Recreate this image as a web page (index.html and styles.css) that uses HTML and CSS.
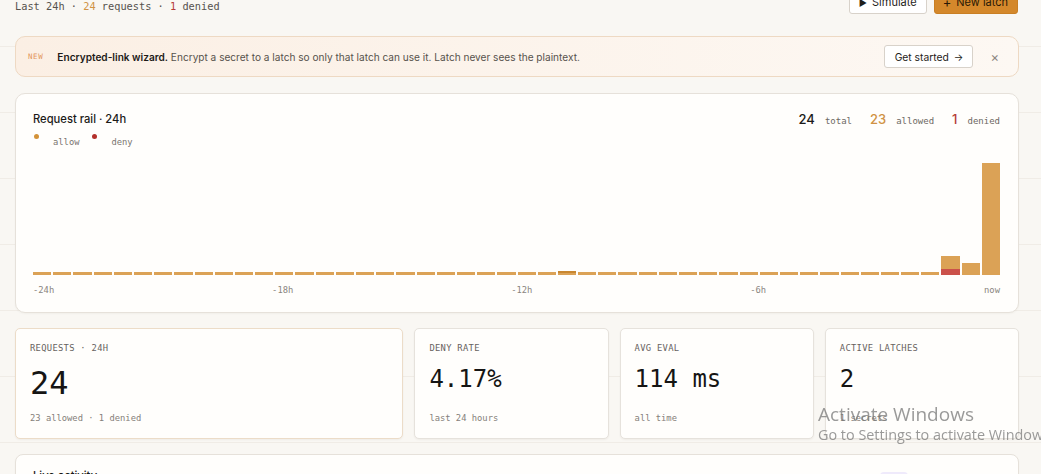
FILE: index.html
```html
<!DOCTYPE html>
<html lang="en">

<head>
  <meta charset="UTF-8">
  <title>Overview</title>
  <link rel="stylesheet" href="styles.css">
</head>

<body>
  <div id="mainContent">
    <!-- Page header -->
    <div class="page-head">
      <div class="page-sub">Last 24h · <span class="c-allow">24</span> requests · <span class="c-deny">1</span> denied</div>
      <div class="head-actions">
        <button class="btn"><span class="btn-icon">&#9654;</span> Simulate</button>
        <button class="btn btn-primary"><span class="btn-icon">+</span> New latch</button>
      </div>
    </div>

    <!-- Wizard banner -->
    <div class="banner">
      <span class="banner-tag">NEW</span>
      <span class="banner-text"><b>Encrypted-link wizard.</b> Encrypt a secret to a latch so only that latch can use it. Latch never sees the plaintext.</span>
      <button class="btn btn-ghost">Get started <span class="arrow">&rarr;</span></button>
      <span class="banner-close">&times;</span>
    </div>

    <!-- Request rail -->
    <div class="card rail">
      <div class="rail-head">
        <div>
          <div class="card-title">Request rail · 24h</div>
          <div class="legend">
            <span class="legend-dot dot-allow"></span><span class="legend-label">allow</span>
            <span class="legend-dot dot-deny"></span><span class="legend-label">deny</span>
          </div>
        </div>
        <div class="rail-stats">
          <span class="rs-num">24</span><span class="rs-label">total</span>
          <span class="rs-num c-allow">23</span><span class="rs-label">allowed</span>
          <span class="rs-num c-deny">1</span><span class="rs-label last">denied</span>
        </div>
      </div>
      <div class="bars" id="bars"></div>
      <div class="axis">
        <span>-24h</span>
        <span>-18h</span>
        <span>-12h</span>
        <span>-6h</span>
        <span>now</span>
      </div>
    </div>

    <!-- Stat cards -->
    <div class="stats">
      <div class="stat stat-main">
        <div class="stat-label">Requests · 24h</div>
        <div class="stat-value big">24</div>
        <div class="stat-sub">23 allowed · 1 denied</div>
      </div>
      <div class="stat">
        <div class="stat-label">Deny rate</div>
        <div class="stat-value">4.17%</div>
        <div class="stat-sub">last 24 hours</div>
      </div>
      <div class="stat">
        <div class="stat-label">Avg eval</div>
        <div class="stat-value">114 ms</div>
        <div class="stat-sub">all time</div>
      </div>
      <div class="stat">
        <div class="stat-label">Active latches</div>
        <div class="stat-value">2</div>
        <div class="stat-sub">1 secrets</div>
      </div>
    </div>

    <!-- Live activity -->
    <div class="card live">
      <div class="card-title">Live activity</div>
      <span class="live-pill"></span>
    </div>
  </div>

  <div class="os-mark">
    <div class="os-mark-title">Activate Windows</div>
    <div class="os-mark-sub">Go to Settings to activate Windows.</div>
  </div>

  <script>
    // 48 buckets of 30 minutes
    const allow = new Array(48).fill(0);
    const deny = new Array(48).fill(0);
    allow[45] = 2; deny[45] = 1;
    allow[46] = 2;
    allow[47] = 18;
    const marked = 26;

    const max = Math.max(...allow.map((a, i) => a + deny[i]));
    const unit = 112 / max;
    const bars = document.getElementById('bars');

    allow.forEach((a, i) => {
      const bar = document.createElement('div');
      const total = a + deny[i];
      bar.className = 'bar';
      if (total === 0) {
        bar.classList.add(i === marked ? 'bar-marked' : 'bar-empty');
      } else {
        bar.style.height = (total * unit) + 'px';
        if (deny[i] > 0) {
          const d = document.createElement('div');
          d.className = 'bar-deny';
          d.style.height = (deny[i] * unit) + 'px';
          bar.appendChild(d);
        }
      }
      bars.appendChild(bar);
    });
  </script>
</body>

</html>
```

FILE: styles.css
```css
body {
  font-family: Inter, "Liberation Sans", sans-serif;
  margin: 0;
  padding: 0;
  background-color: #f9f7f3;
  background-image: linear-gradient(#f0ece6 1px, transparent 1px);
  background-size: 100% 66px;
  background-position: 0 46px;
  color: #1c1b19;
  overflow: hidden;
}

#mainContent {
  width: 1004px;
  margin-left: 15px;
}

.c-allow {
  color: #d09243;
}

.c-deny {
  color: #b53d36;
}

/* Header */
.page-head {
  display: flex;
  justify-content: space-between;
  align-items: flex-end;
  margin-top: -10px;
}

.page-sub {
  font-family: "DejaVu Sans Mono", monospace;
  font-size: 10.3px;
  line-height: 12px;
  color: #56524d;
  margin-bottom: 2px;
}

.head-actions {
  display: flex;
  gap: 7px;
  margin-right: 1px;
}

/* Buttons */
.btn {
  font-family: Inter, "Liberation Sans", sans-serif;
  font-size: 11px;
  height: 24px;
  padding: 0 9px;
  border: 1px solid #d8d2ca;
  border-radius: 3px;
  background-color: #fff;
  color: #1f1d1a;
  display: inline-flex;
  align-items: center;
  gap: 5px;
  cursor: pointer;
}

.btn-icon {
  font-size: 9px;
}

.btn-primary {
  background-color: #d4882b;
  border-color: #c97f24;
  color: #2a1906;
  padding: 0 9px 0 8px;
}

.btn-primary .btn-icon {
  font-size: 13px;
}

.btn-ghost {
  height: 23px;
  padding: 0 9px 0 10px;
  margin-left: auto;
  font-size: 10.3px;
}

.arrow {
  font-size: 10px;
}

/* Banner */
.banner {
  margin-top: 22px;
  height: 41px;
  box-sizing: border-box;
  display: flex;
  align-items: center;
  padding-left: 12px;
  border: 1px solid #eed9c3;
  border-radius: 10px;
  background: linear-gradient(90deg, #fbefe4, #fdf8f3);
}

.banner-tag {
  font-family: "DejaVu Sans Mono", monospace;
  font-size: 7.5px;
  letter-spacing: 0.6px;
  color: #e3965e;
  margin-right: 14px;
}

.banner-text {
  font-size: 10.1px;
  color: #57524c;
}

.banner-text b {
  font-weight: 600;
  color: #1d1a17;
}

.banner-close {
  font-size: 13px;
  color: #8c8782;
  margin: 0 19px 0 17px;
}

/* Cards */
.card {
  background-color: #fffefc;
  border: 1px solid #e6e1da;
  border-radius: 10px;
  box-shadow: 0 1px 2px rgba(60, 40, 20, 0.04);
}

.card-title {
  font-size: 11.2px;
  font-weight: 500;
  line-height: 16px;
  color: #1b1a18;
}

.rail {
  margin-top: 16px;
  padding: 17px 18px 16px 17px;
}

.rail-head {
  display: flex;
  justify-content: space-between;
  align-items: flex-start;
}

.legend {
  display: flex;
  align-items: flex-start;
  margin-top: 4px;
  line-height: 14px;
}

.legend-dot {
  width: 5px;
  height: 5px;
  border-radius: 50%;
  margin: 3px 0 0 1px;
}

.dot-allow {
  background-color: #d39238;
}

.dot-deny {
  background-color: #b3302b;
}

.legend-label {
  font-family: "DejaVu Sans Mono", monospace;
  font-size: 8.8px;
  color: #7a7570;
  margin: 4px 12px 0 14px;
}

.rail-stats {
  display: flex;
  align-items: baseline;
  line-height: 16px;
}

.rs-num {
  font-size: 13px;
  font-weight: 500;
}

.rs-label {
  font-family: "DejaVu Sans Mono", monospace;
  font-size: 9px;
  color: #6d6863;
  margin: 0 18px 0 10px;
}

.rs-label.last {
  margin-right: 0;
}

/* Bars */
.bars {
  display: flex;
  align-items: flex-end;
  gap: 2px;
  height: 120px;
  margin-top: 6px;
}

.bar {
  flex: 1;
  display: flex;
  flex-direction: column;
  justify-content: flex-end;
  background-color: #dba256;
}

.bar-empty {
  height: 3px;
}

.bar-marked {
  height: 4px;
  box-sizing: border-box;
  border-top: 2px solid #c98730;
}

.bar-deny {
  background-color: #cb514a;
}

.axis {
  display: flex;
  justify-content: space-between;
  margin-top: 9px;
  font-family: "DejaVu Sans Mono", monospace;
  font-size: 8.8px;
  line-height: 12px;
  color: #8a8580;
}

/* Stat cards */
.stats {
  display: grid;
  grid-template-columns: 2fr 1fr 1fr 1fr;
  gap: 11px;
  margin-top: 15px;
}

.stat {
  min-height: 111px;
  box-sizing: border-box;
  display: flex;
  flex-direction: column;
  padding: 14px 15px 14px 14px;
  background-color: #fffefc;
  border: 1px solid #e6e2dc;
  border-radius: 5px;
  box-shadow: 0 1px 2px rgba(60, 40, 20, 0.05);
}

.stat-main {
  border-color: #ecdcc8;
}

.stat-label {
  font-family: "DejaVu Sans Mono", monospace;
  font-size: 8.8px;
  letter-spacing: 0.3px;
  line-height: 10px;
  text-transform: uppercase;
  color: #676260;
}

.stat-value {
  font-family: "DejaVu Sans Mono", monospace;
  font-size: 24px;
  line-height: 1;
  margin-top: 14px;
  color: #161514;
}

.stat-value.big {
  font-size: 32px;
}

.stat-sub {
  font-family: "DejaVu Sans Mono", monospace;
  font-size: 8.8px;
  line-height: 12px;
  color: #85807a;
  margin-top: auto;
}

/* Live activity */
.live {
  margin-top: 15px;
  padding: 13px 17px;
  display: flex;
  align-items: flex-start;
  border-radius: 8px;
}

.live-pill {
  margin: 4px 93px 0 auto;
  width: 28px;
  height: 16px;
  border-radius: 4px;
  background-color: #efeafb;
}

/* OS watermark over the page */
.os-mark {
  position: fixed;
  left: 818px;
  top: 402px;
  font-family: "Open Sans", "Noto Sans", sans-serif;
  color: rgba(120, 120, 120, 0.75);
  white-space: nowrap;
}

.os-mark-title {
  font-size: 19px;
  line-height: 24px;
}

.os-mark-sub {
  font-size: 14.4px;
  line-height: 18px;
}
```
